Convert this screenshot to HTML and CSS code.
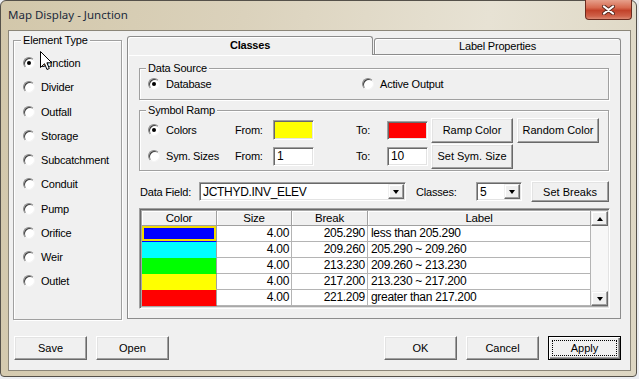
FILE: index.html
```html
<!DOCTYPE html>
<html lang="en">
<head>
    <meta charset="UTF-8">
    <title>Map Display - Junction</title>
    <link rel="stylesheet" href="styles.css">
</head>
<body>
    <div class="window">
        <div class="titlebar">
            <span class="title">Map Display - Junction</span>
            <div class="close-btn">
                <svg width="13" height="10" viewBox="0 0 13 10">
                    <path d="M2 1.5 L11 8.5 M11 1.5 L2 8.5" stroke="#5a2a20" stroke-width="4" stroke-linecap="round"/>
                    <path d="M2 1.5 L11 8.5 M11 1.5 L2 8.5" stroke="#ffffff" stroke-width="2.2" stroke-linecap="round"/>
                </svg>
            </div>
        </div>

        <div class="client">
            <div class="main">
                <fieldset class="group element-type">
                    <legend>Element Type</legend>
                    <div class="option"><span class="radio checked"></span>Junction</div>
                    <div class="option"><span class="radio"></span>Divider</div>
                    <div class="option"><span class="radio"></span>Outfall</div>
                    <div class="option"><span class="radio"></span>Storage</div>
                    <div class="option"><span class="radio"></span>Subcatchment</div>
                    <div class="option"><span class="radio"></span>Conduit</div>
                    <div class="option"><span class="radio"></span>Pump</div>
                    <div class="option"><span class="radio"></span>Orifice</div>
                    <div class="option"><span class="radio"></span>Weir</div>
                    <div class="option"><span class="radio"></span>Outlet</div>
                </fieldset>

                <div class="tabs">
                    <div class="tab-strip">
                        <div class="tab active">Classes</div>
                        <div class="tab">Label Properties</div>
                    </div>
                    <div class="tab-panel">
                        <fieldset class="group data-source">
                            <legend>Data Source</legend>
                            <div class="source-row">
                                <div class="option"><span class="radio checked"></span>Database</div>
                                <div class="option"><span class="radio"></span>Active Output</div>
                            </div>
                        </fieldset>

                        <fieldset class="group symbol-ramp">
                            <legend>Symbol Ramp</legend>
                            <div class="ramp-grid">
                                <div class="option"><span class="radio checked"></span>Colors</div>
                                <span>From:</span>
                                <span class="sunken swatch yellow"></span>
                                <span></span>
                                <span>To:</span>
                                <span class="sunken swatch red"></span>
                                <button class="btn ramp-btn">Ramp Color</button>
                                <button class="btn ramp-btn">Random Color</button>

                                <div class="option"><span class="radio"></span>Sym. Sizes</div>
                                <span>From:</span>
                                <span class="sunken edit">1</span>
                                <span></span>
                                <span>To:</span>
                                <span class="sunken edit">10</span>
                                <button class="btn ramp-btn">Set Sym. Size</button>
                            </div>
                        </fieldset>

                        <div class="field-row">
                            <span class="field-label">Data Field:</span>
                            <div class="sunken combo field-combo">
                                <span class="combo-text">JCTHYD.INV_ELEV</span>
                                <span class="combo-btn"><span class="arrow-down"></span></span>
                            </div>
                            <span class="classes-label">Classes:</span>
                            <div class="sunken combo classes-combo">
                                <span class="combo-text">5</span>
                                <span class="combo-btn"><span class="arrow-down"></span></span>
                            </div>
                            <button class="btn breaks-btn">Set Breaks</button>
                        </div>

                        <div class="sunken grid-box">
                            <div class="grid-rows">
                                <div class="grid-table">
                                    <div class="th">Color</div>
                                    <div class="th">Size</div>
                                    <div class="th">Break</div>
                                    <div class="th">Label</div>

                                    <div class="td color c-blue selected"></div>
                                    <div class="td num">4.00</div>
                                    <div class="td num">205.290</div>
                                    <div class="td">less than 205.290</div>

                                    <div class="td color c-cyan"></div>
                                    <div class="td num">4.00</div>
                                    <div class="td num">209.260</div>
                                    <div class="td">205.290 ~ 209.260</div>

                                    <div class="td color c-green"></div>
                                    <div class="td num">4.00</div>
                                    <div class="td num">213.230</div>
                                    <div class="td">209.260 ~ 213.230</div>

                                    <div class="td color c-yellow"></div>
                                    <div class="td num">4.00</div>
                                    <div class="td num">217.200</div>
                                    <div class="td">213.230 ~ 217.200</div>

                                    <div class="td color c-red"></div>
                                    <div class="td num">4.00</div>
                                    <div class="td num">221.209</div>
                                    <div class="td">greater than 217.200</div>
                                </div>
                                <div class="scrollbar">
                                    <span class="sb-btn"><span class="arrow-up"></span></span>
                                    <span class="sb-track"></span>
                                    <span class="sb-btn"><span class="arrow-down"></span></span>
                                </div>
                            </div>
                        </div>
                    </div>
                </div>
            </div>

            <div class="footer">
                <button class="btn foot-btn">Save</button>
                <button class="btn foot-btn">Open</button>
                <button class="btn foot-btn ok-btn">OK</button>
                <button class="btn foot-btn">Cancel</button>
                <button class="btn foot-btn default"><span class="focus">Apply</span></button>
            </div>
        </div>
    </div>

    <!-- mouse pointer caught in the screenshot -->
    <svg class="cursor" width="13" height="20" viewBox="0 0 13 20">
        <path d="M0.5 0.5 L0.5 16.5 L4.5 12.7 L7 18.5 L9.3 17.5 L6.9 11.8 L11.8 11.8 Z" fill="#fff" stroke="#000" stroke-width="1"/>
    </svg>
</body>
</html>
```

FILE: styles.css
```css
* {
    box-sizing: border-box;
    margin: 0;
    padding: 0;
}

body {
    width: 639px;
    height: 379px;
    overflow: hidden;
    position: relative;
    background: #eceef2;
    font-family: "Liberation Sans", Arial, sans-serif;
    font-size: 11px;
    letter-spacing: -0.2px;
    color: #000;
}

.window {
    width: 637px;
    height: 377px;
    border: 1px solid #55514a;
    border-radius: 6px 6px 4px 4px;
    background: linear-gradient(100deg, #d2c7aa 0%, #dbd2bc 35%, #e7e2d4 70%, #ddd6c2 100%);
    padding: 0 5px 5px 7px;
    display: flex;
    flex-direction: column;
}

.titlebar {
    height: 29px;
    display: flex;
    align-items: flex-start;
    justify-content: space-between;
}

.title {
    font-family: "Noto Sans", sans-serif;
    font-size: 11.5px;
    letter-spacing: 0;
    line-height: 14px;
    margin-top: 7px;
    color: #1c2a3c;
}

.close-btn {
    width: 47px;
    height: 20px;
    margin-top: -1px;
    margin-right: -1px;
    border: 1px solid #6b2b1f;
    border-top: none;
    border-radius: 0 0 4px 4px;
    background: linear-gradient(#e6a08c 0%, #d76a50 40%, #c2422a 55%, #cf6149 85%, #dc8a73 100%);
    display: flex;
    align-items: center;
    justify-content: center;
}

.client {
    flex: 1;
    background: #f0f0f0;
    border: 1px solid #8b8679;
    padding: 3px 9px 0 4px;
}

.main {
    display: flex;
    align-items: flex-start;
}

/* group boxes */
.group {
    border: 1px solid #a0a0a0;
    box-shadow: inset 1px 1px #fff, 1px 1px #fff;
    min-width: 0;
}

.group legend {
    line-height: 13px;
    padding: 0 2px;
    margin-left: -2px;
    background: #f0f0f0;
}

.element-type {
    width: 110px;
    height: 286px;
    padding: 4px 0 0 9px;
}

.option {
    display: flex;
    align-items: center;
    gap: 6px;
    height: 24.25px;
    white-space: nowrap;
}

.radio {
    width: 12px;
    height: 12px;
    border-radius: 50%;
    background: #fff;
    border: 1px solid;
    border-color: #8a8a8a #f4f4f4 #f4f4f4 #8a8a8a;
    box-shadow: inset 1px 1px #404040;
    display: flex;
    align-items: center;
    justify-content: center;
    flex: none;
}

.radio.checked::after {
    content: "";
    width: 4px;
    height: 4px;
    border-radius: 50%;
    background: #000;
}

/* tabs */
.tabs {
    width: 494px;
    margin-left: 5px;
    margin-top: 2px;
}

.tab-strip {
    display: flex;
    align-items: flex-end;
    gap: 1px;
    height: 18px;
}

.tab {
    width: 247px;
    height: 16px;
    border: 1px solid #8c8c8c;
    border-bottom: none;
    border-radius: 3px 3px 0 0;
    box-shadow: inset 1px 1px #fff;
    background: #f0f0f0;
    text-align: center;
    line-height: 15px;
}

.tab.active {
    width: 246px;
    height: 19px;
    margin-bottom: -1px;
    position: relative;
    z-index: 1;
    font-weight: bold;
    line-height: 17px;
}

.tab-panel {
    height: 265px;
    border: 1px solid #8c8c8c;
    box-shadow: inset 1px 1px #fff;
    padding: 7px 11px 0 11px;
}

.data-source {
    padding: 0 8px 6px 8px;
}

.source-row {
    display: grid;
    grid-template-columns: 214px auto;
}

.source-row .option {
    height: 18px;
}

.symbol-ramp {
    margin-top: 4px;
    padding: 0 8px 1px 8px;
}

.ramp-grid {
    display: grid;
    grid-template-columns: 87px 38px 41px 42px 31px 41px 86px 85px;
    grid-auto-rows: 26px;
    align-items: center;
}

.ramp-grid .option {
    height: 26px;
}

/* sunken edit-like boxes */
.sunken {
    border: 1px solid;
    border-color: #a0a0a0 #fff #fff #a0a0a0;
    box-shadow: inset 1px 1px #696969, inset -1px -1px #e3e3e3;
    background: #fff;
}

.swatch {
    width: 41px;
    height: 20px;
}

.swatch.yellow {
    background: #ffff00;
}

.swatch.red {
    background: #ff0000;
    height: 19px;
}

.edit {
    width: 41px;
    height: 19px;
    padding-left: 3px;
    line-height: 17px;
    font-size: 12px;
}

/* buttons */
.btn {
    font: inherit;
    color: #000;
    background: #f0f0f0;
    border: 1px solid;
    border-color: #fff #696969 #696969 #fff;
    box-shadow: inset -1px -1px #a0a0a0, inset 1px 1px #e3e3e3;
    text-align: center;
}

.ramp-btn {
    width: 82px;
    height: 25px;
    margin-left: 3px;
}

.field-row {
    display: flex;
    align-items: center;
    height: 21px;
    margin-top: 10px;
    padding-left: 1px;
}

.field-label {
    width: 59px;
}

.combo {
    display: flex;
    height: 19px;
    padding: 1px;
}

.field-combo {
    width: 207px;
}

.classes-label {
    width: 60px;
    margin-left: 10px;
}

.classes-combo {
    width: 46px;
}

.combo-text {
    flex: 1;
    padding-left: 2px;
    line-height: 16px;
    font-size: 12px;
    letter-spacing: -0.3px;
}

.combo-btn {
    width: 16px;
    background: #f0f0f0;
    border: 1px solid;
    border-color: #f0f0f0 #696969 #696969 #f0f0f0;
    box-shadow: inset -1px -1px #a0a0a0, inset 1px 1px #fff;
    display: flex;
    align-items: center;
    justify-content: center;
}

.arrow-down {
    width: 0;
    height: 0;
    border-left: 3.5px solid transparent;
    border-right: 3.5px solid transparent;
    border-top: 4px solid #000;
}

.arrow-up {
    width: 0;
    height: 0;
    border-left: 3.5px solid transparent;
    border-right: 3.5px solid transparent;
    border-bottom: 4px solid #000;
}

.breaks-btn {
    width: 78px;
    height: 21px;
    margin-left: 9px;
}

/* class grid */
.grid-box {
    width: 471px;
    height: 101px;
    margin-top: 6px;
    padding: 1px;
    background: #a8a8a8;
}

.grid-rows {
    display: flex;
    height: 95px;
    margin: 1px 0 0 1px;
}

.grid-table {
    display: grid;
    grid-template-columns: 75px 75px 76px 223px;
    grid-template-rows: 15px repeat(5, 16px);
    background: #fff;
}

.th {
    background: #f0f0f0;
    border-right: 1px solid #a0a0a0;
    border-bottom: 1px solid #a0a0a0;
    box-shadow: inset 1px 1px #fff;
    text-align: center;
    line-height: 14px;
    font-size: 11.5px;
}

.td {
    background: #fff;
    border-right: 1px solid #b4b4b4;
    border-bottom: 1px solid #b4b4b4;
    line-height: 15px;
    padding: 0 3px;
    font-size: 12px;
    letter-spacing: -0.3px;
    white-space: nowrap;
}

.td.num {
    text-align: right;
    padding-right: 2px;
}

.td.color {
    border-bottom-color: transparent;
    border-right-color: #a0a0a0;
}

.c-blue {
    background: #0000ff;
}

.c-cyan {
    background: #00ffff;
}

.c-green {
    background: #00ff00;
}

.c-yellow {
    background: #ffff00;
}

.c-red {
    background: #ff0000;
}

.td.selected {
    box-shadow: inset 0 0 0 2px #f2da00;
}

.scrollbar {
    width: 17px;
    display: flex;
    flex-direction: column;
    background: #f4f4f4;
}

.sb-btn {
    height: 15px;
    background: #f0f0f0;
    border: 1px solid;
    border-color: #f0f0f0 #696969 #696969 #f0f0f0;
    box-shadow: inset -1px -1px #a0a0a0, inset 1px 1px #fff;
    display: flex;
    align-items: center;
    justify-content: center;
}

.sb-track {
    flex: 1;
    background: #f7f7f7;
}

/* bottom buttons */
.footer {
    display: flex;
    gap: 9px;
    margin-top: 16px;
    padding-left: 1px;
}

.foot-btn {
    width: 73px;
    height: 24px;
}

.ok-btn {
    margin-left: auto;
}

.default {
    border-color: #000;
    box-shadow: inset 1px 1px #fff, inset -1px -1px #696969, inset -2px -2px #a0a0a0;
    padding: 3px;
}

.focus {
    display: block;
    height: 100%;
    border: 1px dotted #000;
    line-height: 14px;
}

.cursor {
    position: absolute;
    left: 40px;
    top: 51px;
}
```
